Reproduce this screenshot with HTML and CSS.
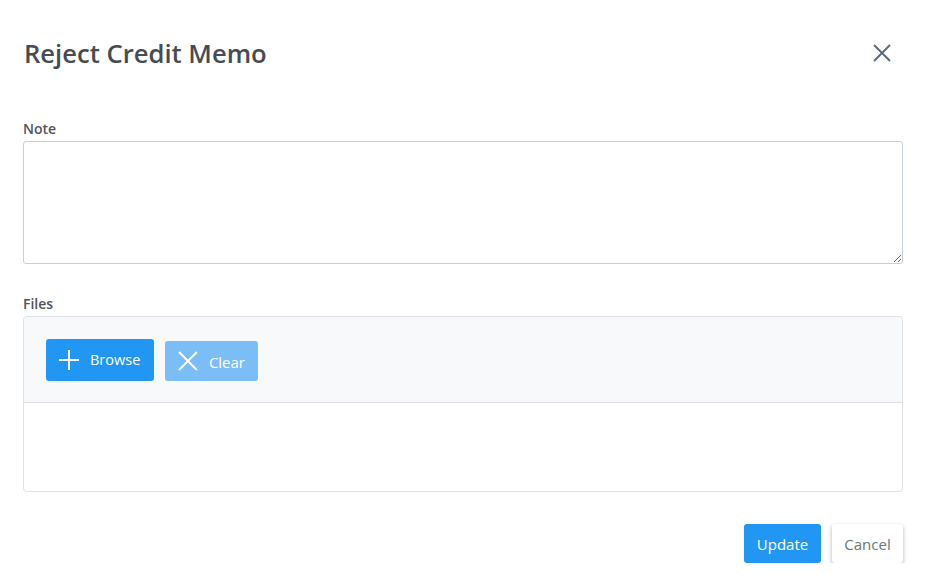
FILE: index.html
```html
<!DOCTYPE html>
<html>
<head>
<meta charset="utf-8">
<link rel="stylesheet" href="styles.css">
</head>
<body>
<div class="dialog">
  <div class="header">
    <h1 class="title">Reject Credit Memo</h1>
    <button class="close" aria-label="Close">
      <svg width="20" height="20" viewBox="0 0 20 20"><path d="M2 2 L18 18 M18 2 L2 18" stroke="#5b6b7a" stroke-width="2" fill="none"/></svg>
    </button>
  </div>
  <div class="content">
    <div class="field">
      <label class="label">Note</label>
      <textarea class="textarea"></textarea>
    </div>
    <div class="field">
      <label class="label">Files</label>
      <div class="upload">
        <div class="upload-bar">
          <button class="btn btn-browse">
            <svg width="22" height="22" viewBox="0 0 22 22"><path d="M11 1 V21 M1 11 H21" stroke="#fff" stroke-width="2"/></svg>
            <span>Browse</span>
          </button>
          <button class="btn btn-clear">
            <svg width="20" height="20" viewBox="0 0 20 20"><path d="M1 1 L19 19 M19 1 L1 19" stroke="#fff" stroke-width="2"/></svg>
            <span>Clear</span>
          </button>
        </div>
        <div class="upload-body"></div>
      </div>
    </div>
  </div>
  <div class="footer">
    <button class="btn btn-update">Update</button>
    <button class="btn btn-cancel">Cancel</button>
  </div>
</div>
</body>
</html>
```
FILE: styles.css
```css
* { box-sizing: border-box; }
html, body { margin: 0; padding: 0; background: #fff; }
body { font-family: "Open Sans", "Noto Sans", sans-serif; color: #495057; }
.dialog { padding: 0 27px 0 23px; width: 930px; }
.header { display: flex; align-items: center; justify-content: space-between; height: 106px; margin-bottom: 14px; }
.title { margin: 0; font-size: 25.6px; font-weight: 600; color: #474c52; letter-spacing: 0; padding-left: 1px; }
.close { background: none; border: none; padding: 0; margin-right: 11px; width: 20px; height: 20px; display: flex; cursor: pointer; }
.content { display: flex; flex-direction: column; gap: 31px; }
.field { display: flex; flex-direction: column; }
.label { font-size: 14px; font-weight: 600; color: #4f555b; margin-bottom: 3px; line-height: 18px; }
.textarea { width: 880px; height: 123px; border: 1px solid #c6ced6; border-radius: 3px; resize: vertical; font-family: inherit; display: block; }
.upload { border: 1px solid #dee2e6; border-radius: 4px; }
.upload-bar { background: #f8f9fa; height: 86px; border-bottom: 1px solid #dee2e6; display: flex; align-items: center; gap: 11px; padding: 0 22px; border-radius: 4px 4px 0 0; }
.upload-body { height: 88px; }
.btn { font-family: inherit; border: none; border-radius: 3px; font-size: 15px; cursor: pointer; }
.btn-browse { background: #2196f3; color: #fff; height: 42px; width: 108px; display: flex; align-items: center; gap: 10px; padding: 0 12px; font-size: 14.5px; }
.btn-clear { background: #7abdf7; color: #fff; height: 40px; width: 93px; display: flex; align-items: center; gap: 11px; padding: 0 13px; margin-top: 3px; }
.btn-clear span { margin-top: 2px; }
.footer { display: flex; justify-content: flex-end; gap: 11px; margin-top: 32px; }
.btn-update { background: #2196f3; color: #fff; height: 39px; width: 77px; }
.btn-cancel { background: #fff; color: #6c757d; height: 39px; width: 71px; box-shadow: 0 2px 4px rgba(0,0,0,0.3); }
```
